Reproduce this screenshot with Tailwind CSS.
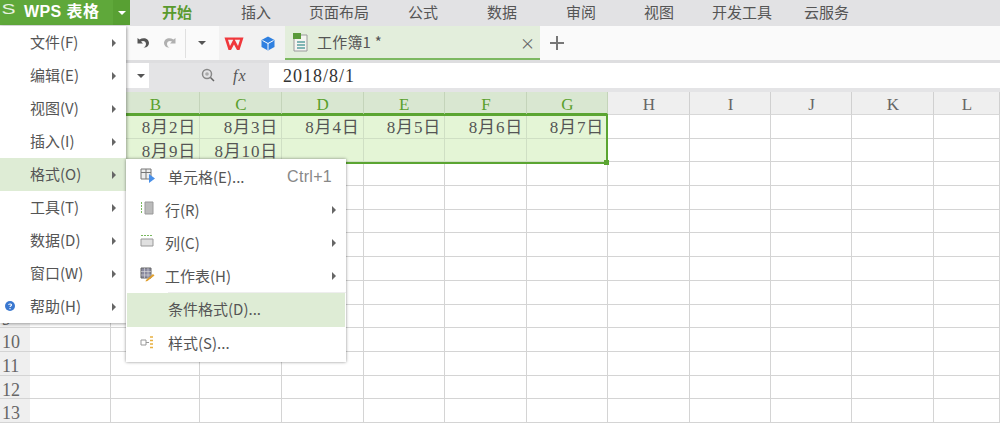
<!DOCTYPE html>
<html lang="zh-CN">
  <head>
    <meta charset="UTF-8" />
    <title>WPS 表格</title>
    <script src="https://cdn.jsdelivr.net/npm/@tailwindcss/browser@4"></script>
  </head>
  <body class="bg-white overflow-hidden">
    <div class="relative w-[1000px] h-[426px] overflow-hidden font-['Noto_Sans_CJK_SC','Liberation_Sans',sans-serif] text-[#555]">

      <!-- title bar -->
      <div class="flex h-[26px] bg-[#e2e2e4] text-[15px] leading-[24px]">
        <div class="flex w-[130px] h-[25px] bg-[#5fa83a] text-white font-bold">
          <span class="w-[24px] text-[#e8f2e0] font-normal text-[14px] font-['Liberation_Sans',sans-serif] pl-[1px] leading-[18px] origin-left scale-x-[1.5]">S</span>
          <span class="w-[89px] whitespace-nowrap text-[16px] tracking-[0.4px] font-['Liberation_Sans','Noto_Sans_CJK_SC',sans-serif]">WPS 表格</span>
          <span class="flex-1 flex items-center justify-center bg-[#58a033]">
            <span class="w-0 h-0 border-x-[4px] border-x-transparent border-t-[4px] border-t-white"></span>
          </span>
        </div>
        <span class="ml-[32px] w-[30px] whitespace-nowrap font-bold text-[#5a9a2e]">开始</span>
        <span class="ml-[49px] w-[31px] whitespace-nowrap">插入</span>
        <span class="ml-[37px] w-[61px] whitespace-nowrap">页面布局</span>
        <span class="ml-[38px] w-[31px] whitespace-nowrap">公式</span>
        <span class="ml-[48px] w-[30px] whitespace-nowrap">数据</span>
        <span class="ml-[49px] w-[30px] whitespace-nowrap">审阅</span>
        <span class="ml-[48px] w-[31px] whitespace-nowrap">视图</span>
        <span class="ml-[37px] w-[62px] whitespace-nowrap">开发工具</span>
        <span class="ml-[30px] w-[46px] whitespace-nowrap">云服务</span>
      </div>

      <!-- quick access + document tabs -->
      <div class="flex h-[34px] bg-[#fafafa] border-b-[3px] border-[#dedee0] box-content">
        <div class="flex items-center w-[219px] pl-[136px]">
          <svg width="14" height="14" viewBox="0 0 14 14"><path d="M1.500 2v5.500H7L5 5.500c2-1.200 5-.5 5 2.500 0 1.500-1 3-2.500 3.500 3 .5 5.500-1.500 5.500-4.500C13 3 8 .5 3.500 3.500z" fill="#555"/></svg>
          <svg class="ml-[13px]" width="14" height="14" viewBox="0 0 14 14"><path d="M12.500 2v5.500H7L9 5.500C7 4.300 4 5 4 8c0 1.500 1 3 2.500 3.500-3 .5-5.500-1.500-5.500-4.500C1 3 6 .5 10.500 3.500z" fill="#b0b0b0"/></svg>
          <span class="ml-[8px] w-px h-[29px] bg-[#e0e0e0]"></span>
          <span class="ml-[12px] w-0 h-0 border-x-[4px] border-x-transparent border-t-[4px] border-t-[#555]"></span>
        </div>
        <div class="flex items-center w-[66px] bg-[#f2f2f2]">
          <svg class="ml-[5px]" width="20" height="15" viewBox="0 0 20 15"><path d="M.5 1.500h19L15.500 14h-2.500L10 8.500 7 14H4.500zM4 3.700l2 6.300L9.200 3.700zM10.800 3.700L14 10l2-6.300z" fill="#f0383c" fill-rule="evenodd"/></svg>
          <svg class="ml-[17px]" width="14" height="15" viewBox="0 0 14 15"><path d="M7 .5l6.500 3.500v7L7 14.500.5 11V4z" fill="#2f80e0"/><path d="M1.500 4.500L7 7.500l5.500-3M7 7.500V14" fill="none" stroke="#fff" stroke-width="1"/></svg>
        </div>
        <div class="flex items-center w-[255px] bg-[#e3eedc] border-b-2 border-[#7cb860]">
          <svg class="ml-[7px]" width="17" height="20" viewBox="0 0 17 20"><path d="M2 3h13v16H2z" fill="#f4f4f0" stroke="#9a9a9a"/><path d="M1 1h8v6H1z" fill="#5a9a3a"/><path d="M5 10h8M5 13h8M5 16h8" stroke="#5aa0a0" stroke-width="1.500"/></svg>
          <span class="ml-[8px] w-[200px] text-[15px] tracking-[0.2px] whitespace-nowrap">工作簿1 *</span>
          <span class="ml-[3px] text-[15px] leading-none text-[#666]">×</span>
        </div>
        <svg class="ml-[9px] mt-[9px]" width="16" height="16" viewBox="0 0 16 16"><path d="M8 1v14M1 8h14" stroke="#777" stroke-width="2"/></svg>
      </div>

      <!-- formula bar -->
      <div class="flex h-[25px] bg-[#e4e4e6]">
        <div class="flex items-center justify-end w-[149px] pr-[4px] bg-white">
          <span class="w-0 h-0 border-x-[4px] border-x-transparent border-t-[4px] border-t-[#555]"></span>
        </div>
        <svg class="ml-[52px] mt-[5px]" width="14" height="14" viewBox="0 0 14 14"><circle cx="6" cy="6" r="4.500" fill="none" stroke="#888" stroke-width="1.500"/><circle cx="6" cy="6" r="1.800" fill="#aaa"/><path d="M9.500 9.500L13 13" stroke="#666" stroke-width="1.500"/></svg>
        <span class="ml-[18px] w-[36px] font-['Liberation_Serif',serif] italic text-[16px] tracking-[1px] leading-[25px]">fx</span>
        <div class="flex-1 bg-white pl-[14px] text-[#333] font-['Liberation_Serif',serif] text-[18px] tracking-[1px] leading-[27px]">2018/8/1</div>
      </div>

      <!-- sheet -->
      <div class="h-[4px] bg-[#e4e4e6]"></div>
      <div id="sheet" class="grid grid-cols-[30px_81px_89px_82px_81.500px_81.500px_82px_81px_82px_81px_81px_82px_66px] grid-rows-[23px_repeat(13,23.700px)] font-['Liberation_Serif','Noto_Sans_CJK_SC',serif]"></div>

      <!-- selection outline -->
      <div class="absolute left-[111px] top-[114px] w-[497px] h-[50px] border-2 border-[#5ba532]">
        <span class="absolute -right-[3px] -bottom-[3px] w-[5px] h-[5px] bg-[#5ba532]"></span>
      </div>

      <!-- file menu -->
      <div class="absolute left-0 top-[26px] w-[126px] bg-white shadow-[1px_1px_3px_rgba(0,0,0,0.35)] text-[15px] leading-[32px]">
        <div class="flex h-[33px] pl-[30px]"><span class="w-[82px]">文件(F)</span><span class="mt-[13px] w-0 h-0 border-y-[4px] border-y-transparent border-l-[4px] border-l-[#666]"></span></div>
        <div class="flex h-[33px] pl-[30px]"><span class="w-[82px]">编辑(E)</span><span class="mt-[13px] w-0 h-0 border-y-[4px] border-y-transparent border-l-[4px] border-l-[#666]"></span></div>
        <div class="flex h-[33px] pl-[30px]"><span class="w-[82px]">视图(V)</span><span class="mt-[13px] w-0 h-0 border-y-[4px] border-y-transparent border-l-[4px] border-l-[#666]"></span></div>
        <div class="flex h-[33px] pl-[30px]"><span class="w-[82px]">插入(I)</span><span class="mt-[13px] w-0 h-0 border-y-[4px] border-y-transparent border-l-[4px] border-l-[#666]"></span></div>
        <div class="flex h-[33px] pl-[30px] bg-[#deecd5]"><span class="w-[82px]">格式(O)</span><span class="mt-[13px] w-0 h-0 border-y-[4px] border-y-transparent border-l-[4px] border-l-[#666]"></span></div>
        <div class="flex h-[33px] pl-[30px]"><span class="w-[82px]">工具(T)</span><span class="mt-[13px] w-0 h-0 border-y-[4px] border-y-transparent border-l-[4px] border-l-[#666]"></span></div>
        <div class="flex h-[33px] pl-[30px]"><span class="w-[82px]">数据(D)</span><span class="mt-[13px] w-0 h-0 border-y-[4px] border-y-transparent border-l-[4px] border-l-[#666]"></span></div>
        <div class="flex h-[33px] pl-[30px]"><span class="w-[82px]">窗口(W)</span><span class="mt-[13px] w-0 h-0 border-y-[4px] border-y-transparent border-l-[4px] border-l-[#666]"></span></div>
        <div class="relative flex h-[33px] pl-[30px]">
          <svg class="absolute left-[5px] top-[11px]" width="10" height="10" viewBox="0 0 10 10"><circle cx="5" cy="5" r="5" fill="#3a78d0"/><path d="M3.500 3.800C3.500 2.800 6.500 2.500 6.500 3.900 6.500 5 5 5 5 6M5 7v1.200" fill="none" stroke="#fff" stroke-width="1.100"/></svg>
          <span class="w-[82px]">帮助(H)</span><span class="mt-[13px] w-0 h-0 border-y-[4px] border-y-transparent border-l-[4px] border-l-[#666]"></span>
        </div>
      </div>

      <!-- format submenu -->
      <div class="absolute left-[126px] top-[159px] w-[220px] h-[203px] bg-white shadow-[0_0_3px_rgba(0,0,0,0.45)] text-[15px] leading-[32px] pt-px">
        <div class="relative flex items-center h-[33px] pl-[42px]">
          <svg class="absolute left-[14px] top-[8px]" width="16" height="16" viewBox="0 0 16 16"><path d="M1 1h10v10H1z" fill="#eee" stroke="#777"/><path d="M1 4.500h10M6 1v10" stroke="#777"/><path d="M9 6l6 4.500-6 4.500z" fill="#4a90e8"/></svg>
          <span class="flex-1">单元格(E)...</span><span class="pr-[14px] text-[#888] text-[16px] tracking-[0.3px] font-['Liberation_Sans',sans-serif]">Ctrl+1</span>
        </div>
        <div class="relative flex items-center h-[33px] pl-[39px]">
          <svg class="absolute left-[14px] top-[8px]" width="14" height="14" viewBox="0 0 14 14"><path d="M1.500 1v12" stroke="#7ab860" stroke-dasharray="2 1"/><path d="M5 1h8v12H5z" fill="#bbb" stroke="#999"/></svg>
          <span class="flex-1">行(R)</span><span class="mr-[10px] w-0 h-0 border-y-[4px] border-y-transparent border-l-[4px] border-l-[#666]"></span>
        </div>
        <div class="relative flex items-center h-[33px] pl-[39px]">
          <svg class="absolute left-[14px] top-[8px]" width="14" height="14" viewBox="0 0 14 14"><path d="M1 1.500h12" stroke="#7ab860" stroke-dasharray="2 1"/><path d="M1 5h12v7H1z" fill="#e0e0e0" stroke="#999"/></svg>
          <span class="flex-1">列(C)</span><span class="mr-[10px] w-0 h-0 border-y-[4px] border-y-transparent border-l-[4px] border-l-[#666]"></span>
        </div>
        <div class="relative flex items-center h-[33px] pl-[39px]">
          <svg class="absolute left-[14px] top-[8px]" width="15" height="15" viewBox="0 0 15 15"><path d="M1 1h10v10H1z" fill="#8a8aa0" stroke="#666"/><path d="M1 4.500h10M1 8h10M4.500 1v10M8 1v10" stroke="#ddd" stroke-width=".6"/><path d="M6 13l7-6 1.500 1.500-7 5.500-2 .5z" fill="#e0a030"/></svg>
          <span class="flex-1">工作表(H)</span><span class="mr-[10px] w-0 h-0 border-y-[4px] border-y-transparent border-l-[4px] border-l-[#666]"></span>
        </div>
        <div class="h-px ml-[42px] bg-[#eee]"></div>
        <div class="h-[34px] mx-px pl-[41px] bg-[#deecd5]">条件格式(D)...</div>
        <div class="relative h-[33px] pl-[42px]">
          <svg class="absolute left-[14px] top-[9px]" width="14" height="13" viewBox="0 0 14 13"><path d="M1 4h5v5H1z" fill="#fff" stroke="#999"/><path d="M6 6.500h3" stroke="#999"/><path d="M10 1h3M10 4.500h3M10 8h3M10 11.500h3" stroke="#e8b040" stroke-width="1.500"/></svg>
          样式(S)...
        </div>
      </div>
    </div>

    <script>
      // column A sits under the menu, so its header stays empty
      const letters = ["", "B", "C", "D", "E", "F", "G", "H", "I", "J", "K", "L"];
      const dates = {
        "0-1": "8月2日", "0-2": "8月3日", "0-3": "8月4日", "0-4": "8月5日", "0-5": "8月6日", "0-6": "8月7日",
        "1-1": "8月9日", "1-2": "8月10日",
      };
      const sheet = document.getElementById("sheet");

      function addCell(className, text) {
        const cell = document.createElement("div");
        cell.className = className;
        cell.textContent = text || "";
        sheet.appendChild(cell);
      }

      addCell("bg-[#efefef]");
      letters.forEach((l, i) => {
        if (i < 7) addCell("bg-[#d9e7d1] border-b-2 border-[#5ba532] border-r border-r-[#c4d4ba] text-center pl-[1px] text-[17px] leading-[25px] text-[#5aa02c]", l);
        else addCell("bg-[#efefef] border-b border-[#d8d8d8] border-r border-r-[#d0d0d0] text-center pl-[1px] text-[17px] leading-[25px] text-[#666]", l);
      });

      for (let r = 0; r < 13; r++) {
        // rows above 9 are fully covered by the menu
        addCell("bg-[#efefef] border-b border-[#d4d4d4] text-[18px] leading-[28px] pl-[2px] text-[#666] whitespace-nowrap overflow-hidden", r >= 8 ? String(r + 1) : "");
        for (let c = 0; c < 12; c++) {
          if (r < 2 && c < 7) addCell("bg-[#e4f5d6] border-r border-b border-[#cfdfc4] text-right pr-[3px] text-[17px] tracking-[0.8px] leading-[26px] whitespace-nowrap text-[#555]", dates[r + "-" + c]);
          else addCell("border-r border-b border-[#d4d4d4]");
        }
      }
    </script>
  </body>
</html>
